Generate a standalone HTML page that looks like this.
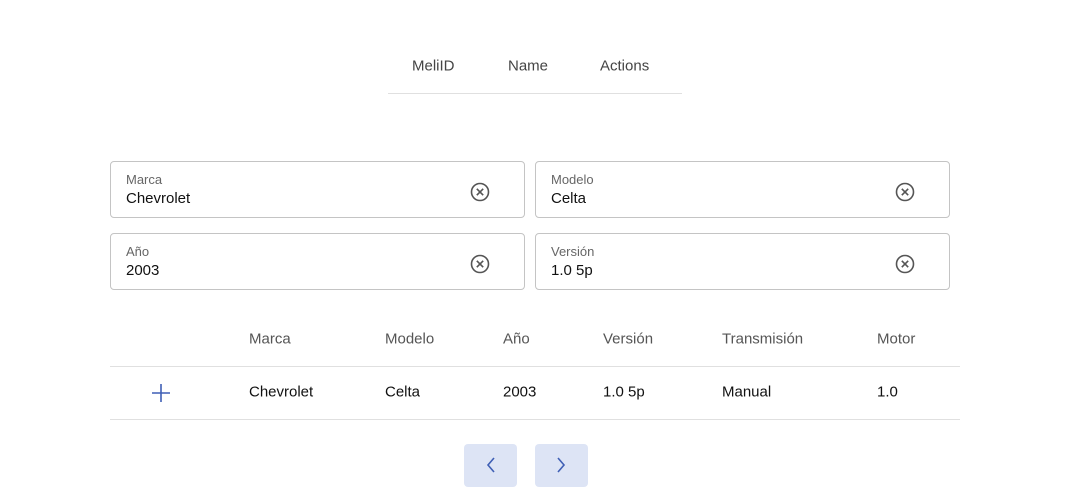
<!DOCTYPE html>
<html><head><style>
body{margin:0;width:1072px;height:504px;background:#fff;font-family:"Liberation Sans",sans-serif;position:relative;overflow:hidden}
.a{position:absolute;white-space:nowrap}
.h{font-size:15px;color:#444;transform:translateY(-50%)}
.f{position:absolute;border:1px solid #c4c4c4;border-radius:4px;width:415px;height:57px;box-sizing:border-box}
.f .l{position:absolute;left:15px;top:10px;font-size:13px;color:#666}
.f .v{position:absolute;left:15px;top:28px;font-size:15px;color:#111}
.f svg{position:absolute;left:358px;top:19px}
.th{font-size:15px;color:#555;transform:translateY(-50%)}
.td{font-size:15px;color:#111;transform:translateY(-50%)}
.btn{position:absolute;width:53px;height:43px;background:#dde4f5;border-radius:4px;top:444px}
</style></head><body>
<div class="a h" style="left:412px;top:66px">MeliID</div>
<div class="a h" style="left:508px;top:66px">Name</div>
<div class="a h" style="left:600px;top:66px">Actions</div>
<div class="a" style="left:388px;top:93px;width:294px;height:1px;background:#e0e0e0"></div>

<div class="f" style="left:110px;top:161px"><span class="l">Marca</span><span class="v">Chevrolet</span><svg width="22" height="22" viewBox="0 0 22 22"><circle cx="11" cy="11" r="8.5" fill="none" stroke="#555" stroke-width="1.6"/><path d="M7.8 7.8L14.2 14.2M14.2 7.8L7.8 14.2" stroke="#555" stroke-width="1.6"/></svg></div>
<div class="f" style="left:535px;top:161px"><span class="l">Modelo</span><span class="v">Celta</span><svg width="22" height="22" viewBox="0 0 22 22"><circle cx="11" cy="11" r="8.5" fill="none" stroke="#555" stroke-width="1.6"/><path d="M7.8 7.8L14.2 14.2M14.2 7.8L7.8 14.2" stroke="#555" stroke-width="1.6"/></svg></div>
<div class="f" style="left:110px;top:233px"><span class="l">Año</span><span class="v">2003</span><svg width="22" height="22" viewBox="0 0 22 22"><circle cx="11" cy="11" r="8.5" fill="none" stroke="#555" stroke-width="1.6"/><path d="M7.8 7.8L14.2 14.2M14.2 7.8L7.8 14.2" stroke="#555" stroke-width="1.6"/></svg></div>
<div class="f" style="left:535px;top:233px"><span class="l">Versión</span><span class="v">1.0 5p</span><svg width="22" height="22" viewBox="0 0 22 22"><circle cx="11" cy="11" r="8.5" fill="none" stroke="#555" stroke-width="1.6"/><path d="M7.8 7.8L14.2 14.2M14.2 7.8L7.8 14.2" stroke="#555" stroke-width="1.6"/></svg></div>

<div class="a th" style="left:249px;top:339px">Marca</div>
<div class="a th" style="left:385px;top:339px">Modelo</div>
<div class="a th" style="left:503px;top:339px">Año</div>
<div class="a th" style="left:603px;top:339px">Versión</div>
<div class="a th" style="left:722px;top:339px">Transmisión</div>
<div class="a th" style="left:877px;top:339px">Motor</div>
<div class="a" style="left:110px;top:366px;width:850px;height:1px;background:#e0e0e0"></div>
<svg class="a" style="left:151px;top:383px" width="20" height="20" viewBox="0 0 20 20"><path d="M10 1V19M1 10H19" stroke="#3f5fb5" stroke-width="1.6"/></svg>
<div class="a td" style="left:249px;top:392px">Chevrolet</div>
<div class="a td" style="left:385px;top:392px">Celta</div>
<div class="a td" style="left:503px;top:392px">2003</div>
<div class="a td" style="left:603px;top:392px">1.0 5p</div>
<div class="a td" style="left:722px;top:392px">Manual</div>
<div class="a td" style="left:877px;top:392px">1.0</div>
<div class="a" style="left:110px;top:419px;width:850px;height:1px;background:#e0e0e0"></div>

<div class="btn" style="left:464px"><svg width="53" height="43" viewBox="0 0 53 43"><path d="M30 14L24 21L30 28" fill="none" stroke="#3f5fb5" stroke-width="1.6"/></svg></div>
<div class="btn" style="left:535px"><svg width="53" height="43" viewBox="0 0 53 43"><path d="M23 14L29 21L23 28" fill="none" stroke="#3f5fb5" stroke-width="1.6"/></svg></div>
</body></html>
